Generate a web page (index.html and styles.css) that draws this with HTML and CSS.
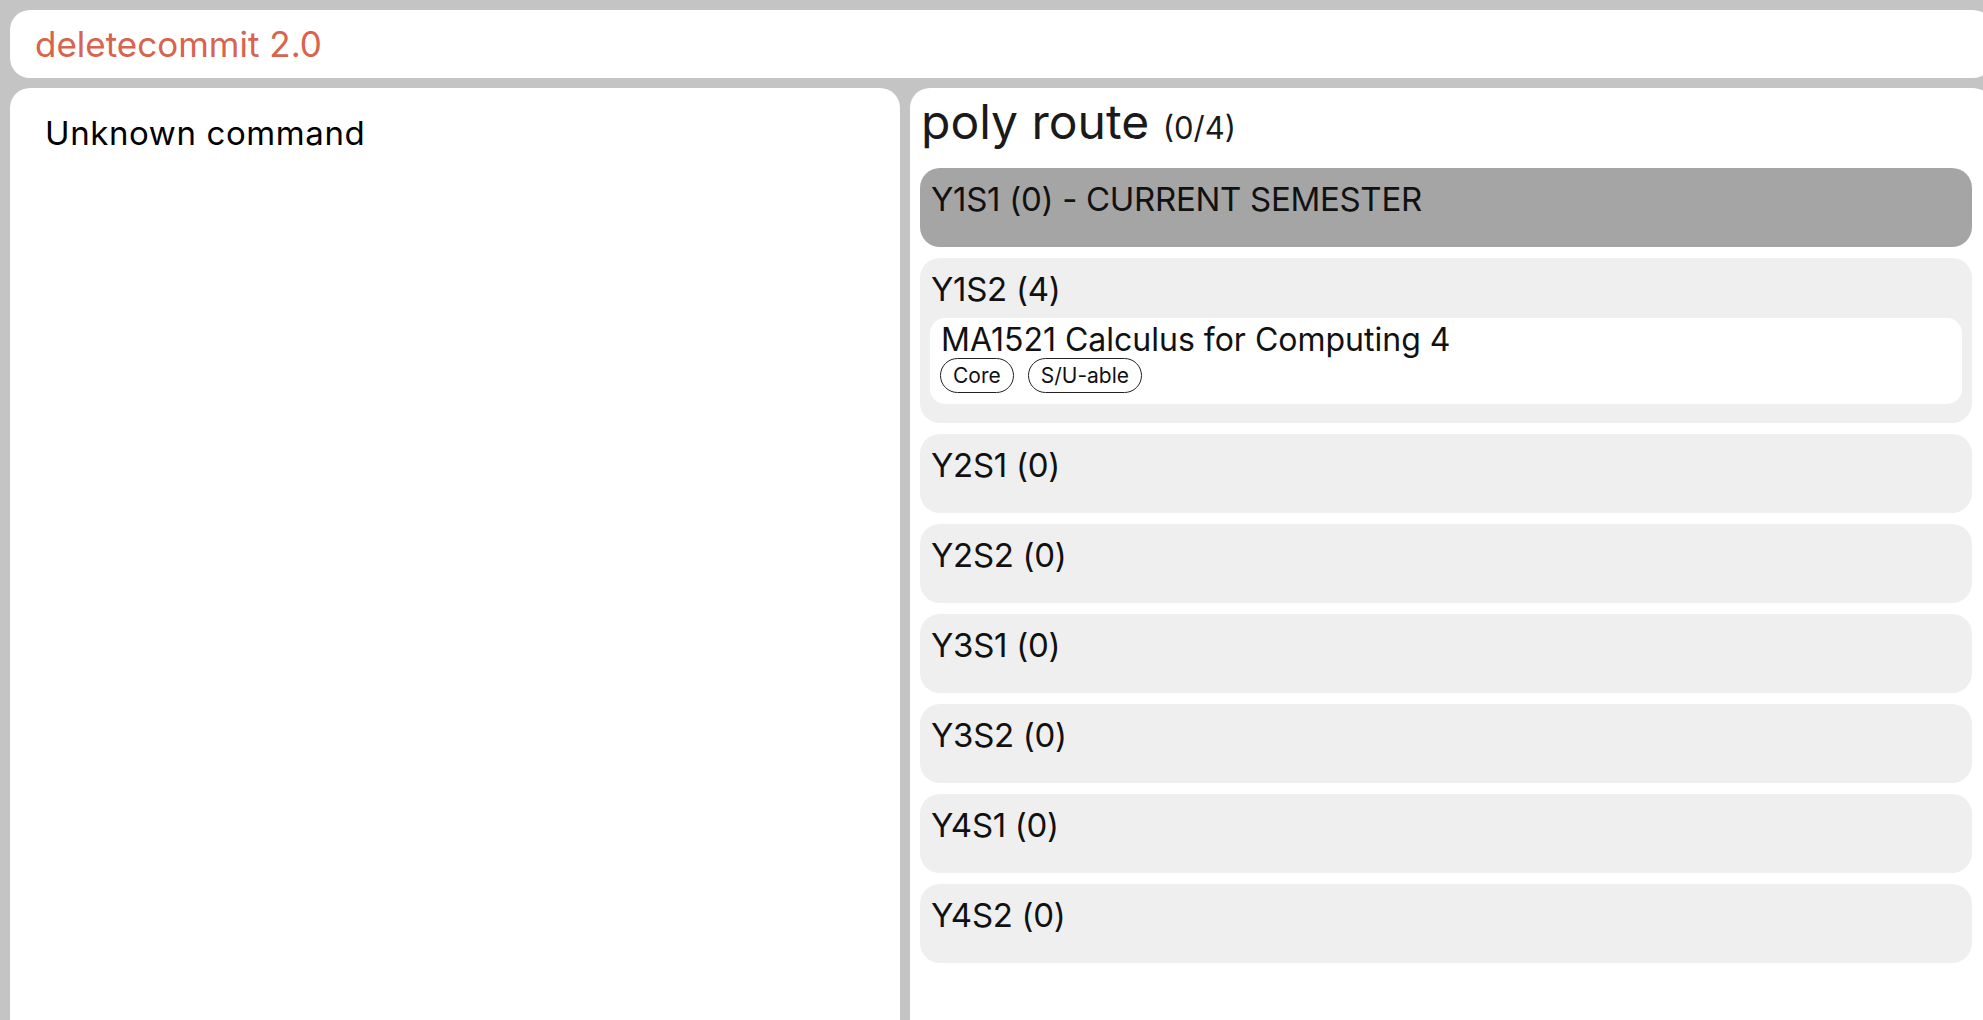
FILE: index.html
```html
<!DOCTYPE html>
<html>
<head>
<meta charset="utf-8">
<title>deletecommit 2.0</title>
<link rel="stylesheet" href="styles.css">
</head>
<body>
<div class="app">
  <header class="topbar"><span class="brand">deletecommit 2.0</span></header>
  <main class="main">
    <section class="left">
      <p class="result">Unknown command</p>
    </section>
    <section class="right">
      <h1 class="plan-title">poly route <span class="plan-count">(0/4)</span></h1>
      <div class="semesters">
        <div class="sem current">
          <div class="sem-title">Y1S1 (0) - CURRENT SEMESTER</div>
          <div class="sem-list"></div>
        </div>
        <div class="sem">
          <div class="sem-title">Y1S2 (4)</div>
          <div class="sem-list">
            <div class="module">
              <div class="mod-title">MA1521 Calculus for Computing 4</div>
              <div class="tags"><span class="tag">Core</span><span class="tag">S/U-able</span></div>
            </div>
          </div>
        </div>
        <div class="sem"><div class="sem-title">Y2S1 (0)</div><div class="sem-list"></div></div>
        <div class="sem"><div class="sem-title">Y2S2 (0)</div><div class="sem-list"></div></div>
        <div class="sem"><div class="sem-title">Y3S1 (0)</div><div class="sem-list"></div></div>
        <div class="sem"><div class="sem-title">Y3S2 (0)</div><div class="sem-list"></div></div>
        <div class="sem"><div class="sem-title">Y4S1 (0)</div><div class="sem-list"></div></div>
        <div class="sem"><div class="sem-title">Y4S2 (0)</div><div class="sem-list"></div></div>
      </div>
    </section>
  </main>
</div>
</body>
</html>
```

FILE: styles.css
```css
html, body {
  margin: 0;
  padding: 0;
  height: 100%;
  overflow: hidden;
}
body {
  background: #c4c4c4;
  font-family: Inter, "Noto Sans", "Liberation Sans", sans-serif;
  color: #111;
}
.app {
  box-sizing: border-box;
  width: calc(100% + 10px);
  padding: 10px 0 0 10px;
  display: flex;
  flex-direction: column;
  gap: 10px;
}
.topbar {
  height: 68px;
  background: #fff;
  border-radius: 20px;
  display: flex;
  align-items: center;
  padding-left: 25px;
}
.brand {
  color: #d8634e;
  font-size: 35px;
}
.main {
  display: flex;
  gap: 10px;
  height: 980px;
}
.left {
  width: 890px;
  flex: none;
  background: #fff;
  border-radius: 20px 20px 0 0;
  padding: 25px 35px;
  box-sizing: border-box;
}
.result {
  margin: 0;
  font-size: 33px;
  letter-spacing: 0.6px;
  color: #000;
}
.right {
  flex: 1;
  background: #fff;
  border-radius: 20px 20px 0 0;
  padding: 6px 21px 0 10px;
  box-sizing: border-box;
}
.plan-title {
  margin: 0;
  font-weight: 400;
  font-size: 48px;
  line-height: 56px;
  padding-left: 1px;
  color: #1a1a1a;
}
.plan-count {
  font-size: 31px;
}
.semesters {
  margin-top: 12px;
  display: flex;
  flex-direction: column;
  gap: 11px;
}
.sem {
  background: #efefef;
  border-radius: 20px;
  padding: 11px 10px 19px;
}
.sem.current {
  background: #a5a5a5;
}
.sem-title {
  font-size: 33px;
  letter-spacing: -0.3px;
  line-height: 40px;
  padding-left: 1px;
  color: #111;
}
.sem-list {
  padding-top: 9px;
}
.module {
  background: #fff;
  border-radius: 15px;
  padding: 3px 10px 11px;
}
.mod-title {
  font-size: 32px;
  line-height: 37px;
  padding-left: 1px;
}
.tags {
  display: flex;
  gap: 14px;
}
.tag {
  box-sizing: border-box;
  height: 35px;
  padding: 0 12px;
  border: 1.5px solid #222;
  border-radius: 18px;
  font-size: 21px;
  display: flex;
  align-items: center;
}
```
